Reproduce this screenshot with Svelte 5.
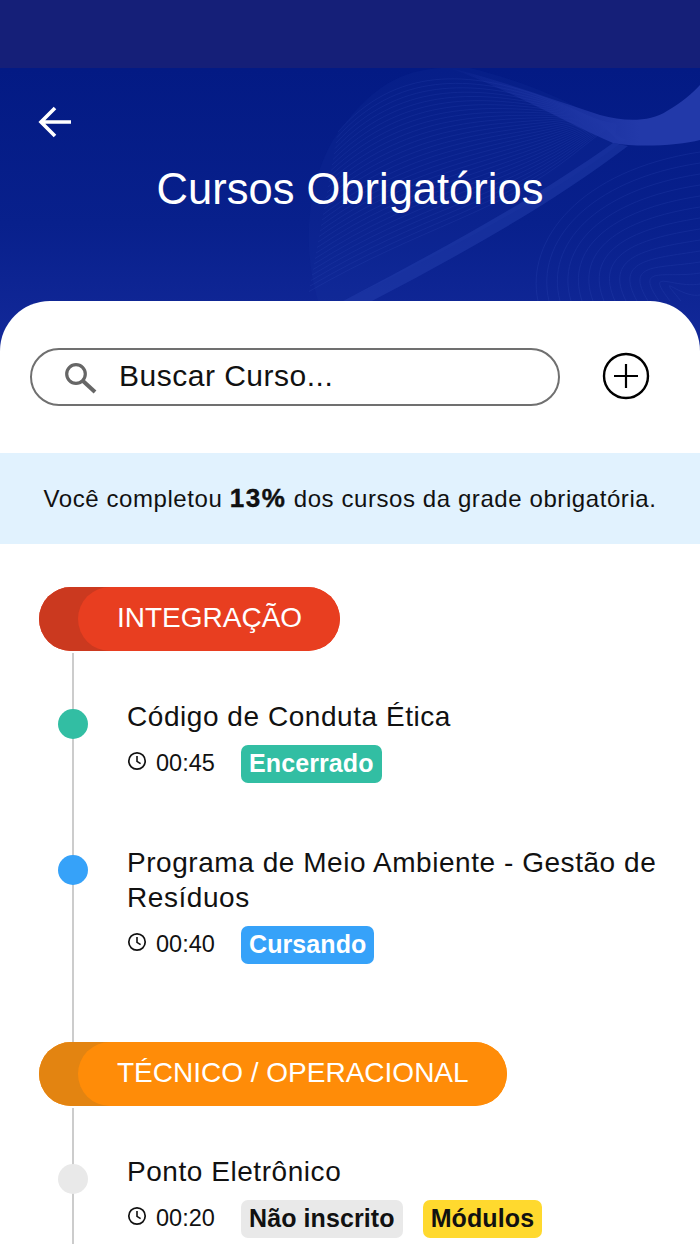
<script lang="ts">
	type Course = {
		title: string;
		time: string;
		dot: string;
		tags: { label: string; kind: string }[];
	};

	const sections: { name: string; kind: string; courses: Course[] }[] = [
		{
			name: 'INTEGRAÇÃO',
			kind: 'red',
			courses: [
				{
					title: 'Código de Conduta Ética',
					time: '00:45',
					dot: '#32bea3',
					tags: [{ label: 'Encerrado', kind: 'done' }]
				},
				{
					title: 'Programa de Meio Ambiente - Gestão de Resíduos',
					time: '00:40',
					dot: '#36a2f9',
					tags: [{ label: 'Cursando', kind: 'ongoing' }]
				}
			]
		},
		{
			name: 'TÉCNICO / OPERACIONAL',
			kind: 'orange',
			courses: [
				{
					title: 'Ponto Eletrônico',
					time: '00:20',
					dot: '#e9e9e9',
					tags: [
						{ label: 'Não inscrito', kind: 'none' },
						{ label: 'Módulos', kind: 'modules' }
					]
				}
			]
		}
	];

	// header artwork: mesh running into the ribbon, arcs in the lower right
	const meshLines = Array.from({ length: 30 }, (_, i) => {
		const s = i * 5.5;
		return `M${338 - i} ${132 + s} C${395 + i} ${66 + s} ${470 + i} ${70 + s * 0.9} ${545 + i} ${98 + s * 0.35} S${595} ${128 + s * 0.1} ${625} ${140}`;
	});
	const arcs = Array.from({ length: 14 }, (_, i) => {
		const k = i * 11;
		return `M${538 + k} 301 C${525 + k * 0.9} ${240 + k * 0.2} ${580 + k * 0.7} ${170 + k * 0.9} 700 ${152 + k}`;
	});
</script>

<div class="screen">
	<div class="status-bar"></div>

	<header class="hero">
		<svg class="art" viewBox="0 68 700 283" aria-hidden="true">
			<defs>
				<linearGradient id="ribbon" gradientUnits="userSpaceOnUse" x1="440" y1="0" x2="640" y2="0">
					<stop offset="0" stop-color="#2239a9" stop-opacity="0" />
					<stop offset="1" stop-color="#2239a9" />
				</linearGradient>
			</defs>
			<path d="M333 140 C380 70 420 66 470 68 C540 85 600 115 625 140 C560 190 450 250 343 301 L318 301 C300 240 310 180 333 140 Z" fill="#2a45b5" opacity="0.1" />
			<g fill="none" stroke="#4a66d2" stroke-width="0.8" opacity="0.16">
				{#each meshLines as d}
					<path {d} />
				{/each}
			</g>
			<g fill="none" stroke="#4a66d2" stroke-width="1" opacity="0.14">
				{#each arcs as d}
					<path {d} />
				{/each}
			</g>
			<path d="M613 143 C540 195 450 245 343 301 L372 301 C460 255 550 205 628 146 Z" fill="#2a45b5" opacity="0.4" />
			<path d="M450 68 C500 80 560 102 600 115 C625 122 650 122 667 111 C682 102 692 94 700 85 L700 140 C680 145 640 148 613 143 C570 125 510 90 450 68 Z" fill="url(#ribbon)" />
		</svg>
		<button class="back" type="button" aria-label="Voltar">
			<svg width="34" height="34" viewBox="0 0 34 34">
				<path d="M33 17H4M17 3 3 17l14 14" fill="none" stroke="#fff" stroke-width="3.6" />
			</svg>
		</button>
		<h1>Cursos Obrigatórios</h1>
	</header>

	<main class="sheet">
		<div class="search-row">
			<div class="search">
				<svg class="search-icon" width="34" height="34" viewBox="0 0 34 34">
					<circle cx="13" cy="14" r="9.3" fill="none" stroke="#666" stroke-width="3.2" />
					<path d="M20 21l12 11" stroke="#666" stroke-width="4" />
				</svg>
				<span>Buscar Curso...</span>
			</div>
			<button class="add" type="button" aria-label="Adicionar">
				<svg width="48" height="48" viewBox="0 0 48 48">
					<circle cx="24" cy="24" r="22" fill="none" stroke="#000" stroke-width="2.4" />
					<path d="M24 12v24M12 24h24" stroke="#000" stroke-width="2.2" />
				</svg>
			</button>
		</div>

		<p class="progress">Você completou <b>13%</b> dos cursos da grade obrigatória.</p>

		{#each sections as section}
			<section class="group">
				<div class="pill {section.kind}"><span>{section.name}</span></div>
				<ul class="timeline">
					{#each section.courses as course}
						<li class="course">
							<div class="head">
								<i class="dot" style="background: {course.dot}"></i>
								<h2>{course.title}</h2>
							</div>
							<div class="meta">
								<svg width="20" height="20" viewBox="0 0 20 20">
									<circle cx="10" cy="10" r="8.2" fill="none" stroke="#111" stroke-width="1.7" />
									<path d="M10 5v5.4l3.6 2.2" fill="none" stroke="#111" stroke-width="1.6" />
								</svg>
								<span class="time">{course.time}</span>
								{#each course.tags as tag}
									<span class="tag {tag.kind}">{tag.label}</span>
								{/each}
							</div>
						</li>
					{/each}
				</ul>
			</section>
		{/each}
	</main>
</div>

<style>
	:global(html),
	:global(body) {
		margin: 0;
		background: #fff;
	}

	.screen {
		width: 700px;
		height: 1244px;
		overflow: hidden;
		background: #fff;
		font-family: 'Liberation Sans', Arial, sans-serif;
		color: #111;
	}

	.status-bar {
		height: 68px;
		background: #151f78;
	}

	.hero {
		position: relative;
		height: 283px;
		background: linear-gradient(180deg, #031a84 0%, #08208c 55%, #13299a 100%);
		overflow: hidden;
	}

	.art {
		position: absolute;
		top: 0;
		left: 0;
		width: 700px;
		height: 283px;
	}

	.back {
		position: absolute;
		top: 37px;
		left: 38px;
		display: block;
		padding: 0;
		border: 0;
		background: none;
	}

	h1 {
		position: relative;
		margin: 0;
		padding-top: 95px;
		text-align: center;
		font-size: 43.5px;
		line-height: 52px;
		font-weight: 400;
		color: #fff;
	}

	.sheet {
		position: relative;
		margin-top: -50px;
		height: 943px;
		background: #fff;
		border-radius: 50px 50px 0 0;
		overflow: hidden;
	}

	.search-row {
		display: flex;
		align-items: center;
		padding: 47px 0 47px 30px;
	}

	.search {
		box-sizing: border-box;
		width: 530px;
		height: 58px;
		display: flex;
		align-items: center;
		padding-left: 31px;
		border: 2px solid #707070;
		border-radius: 29px;
		font-size: 30px;
		letter-spacing: 0.5px;
		line-height: 52px;
	}

	.search-icon {
		margin-right: 22px;
	}

	.search span {
		margin-top: -2px;
	}

	.add {
		display: block;
		margin-left: 42px;
		padding: 0;
		border: 0;
		background: none;
	}

	.progress {
		height: 91px;
		margin: 0;
		background: #e1f2fe;
		text-align: center;
		font-size: 24px;
		letter-spacing: 0.58px;
		line-height: 91px;
	}

	.progress b {
		font-size: 26px;
		letter-spacing: 1.6px;
		-webkit-text-stroke: 0.4px #000;
	}

	.group {
		padding-left: 39px;
	}

	.group:first-of-type {
		padding-top: 43px;
	}

	.pill {
		position: relative;
		box-sizing: border-box;
		width: fit-content;
		height: 64px;
		padding: 0 38px 0 78px;
		border-radius: 32px;
		font-size: 28px;
		line-height: 62px;
		color: #fff;
		overflow: hidden;
	}

	.pill span {
		position: relative;
	}

	.pill::before {
		content: '';
		position: absolute;
		top: 0;
		bottom: 0;
		left: 39px;
		right: 0;
		border-radius: 32px;
		background: inherit;
	}

	.pill.red {
		background: #e83e20;
		box-shadow: inset 64px 0 0 #cb391f;
	}

	.pill.orange {
		background: #ff8c08;
		box-shadow: inset 64px 0 0 #e38411;
	}

	.timeline {
		list-style: none;
		margin: 2px 0 0 33px;
		padding: 0 0 78px;
		border-left: 2px solid #ccc;
	}

	.course {
		padding: 46px 30px 0 53px;
	}

	.course + .course {
		padding-top: 62px;
	}

	.head {
		position: relative;
	}

	.dot {
		position: absolute;
		left: -69px;
		top: 10px;
		width: 30px;
		height: 30px;
		border-radius: 50%;
	}

	h2 {
		margin: 0;
		font-size: 28px;
		line-height: 35px;
		font-weight: 400;
		letter-spacing: 0.55px;
		color: #111;
	}

	.meta {
		display: flex;
		align-items: center;
		margin-top: 11px;
		height: 38px;
	}

	.meta svg {
		margin-bottom: 6px;
	}

	.time {
		width: 85px;
		margin-left: 9px;
		margin-top: -2px;
		font-size: 23.5px;
	}

	.tag {
		box-sizing: border-box;
		height: 38px;
		padding: 0 8px;
		margin-right: 20px;
		border-radius: 7px;
		font-size: 25px;
		letter-spacing: 0.1px;
		line-height: 37px;
		font-weight: 700;
	}

	.done {
		background: #32bea3;
		color: #fff;
	}

	.ongoing {
		background: #36a2f9;
		color: #fff;
	}

	.none {
		background: #e9e9e9;
		color: #111;
	}

	.modules {
		background: #ffd92e;
		color: #111;
	}
</style>
